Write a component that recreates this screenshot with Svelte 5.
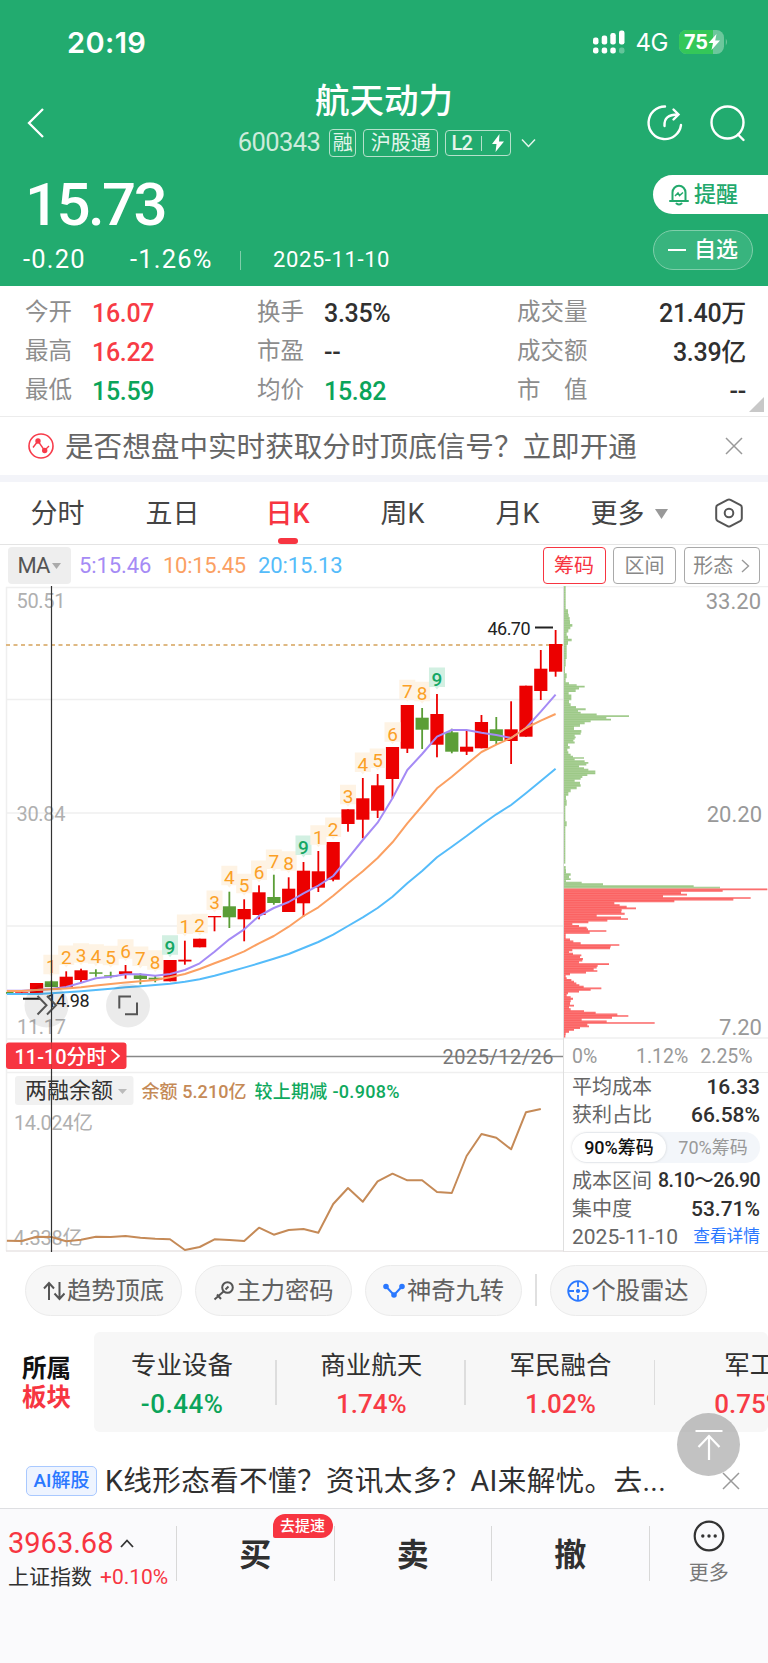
<script>
    const stats = [
        [
            { label: '今开', value: '16.07', tone: 'up' },
            { label: '最高', value: '16.22', tone: 'up' },
            { label: '最低', value: '15.59', tone: 'down' },
        ],
        [
            { label: '换手', value: '3.35%' },
            { label: '市盈', value: '--' },
            { label: '均价', value: '15.82', tone: 'down' },
        ],
        [
            { label: '成交量', value: '21.40万' },
            { label: '成交额', value: '3.39亿' },
            { label: '市　值', value: '--' },
        ],
    ];

    const tabs = ['分时', '五日', '日K', '周K', '月K'];
    let activeTab = $state('日K');

    const sectors = [
        { name: '专业设备', change: '-0.44%' },
        { name: '商业航天', change: '1.74%' },
        { name: '军民融合', change: '1.02%' },
        { name: '军工', change: '0.75%' },
    ];

    // up / down, then body top, body bottom, wick top, wick bottom
    const candles = [
        ['down', 992, 993.5, 992, 993.5],
        ['up', 992.3, 993.6, 992.3, 993.6],
        ['up', 983, 994.3, 983, 994.3],
        ['down', 981.3, 987, 980.5, 987],
        ['up', 976.7, 987.3, 971.3, 987.3],
        ['up', 970.3, 980, 968.7, 982.3],
        ['down', 972.3, 973.8, 969.3, 976.7],
        ['down', 975.3, 976.6, 971.7, 978.3],
        ['up', 971.3, 974, 965, 978.7],
        ['down', 975.3, 979, 973.3, 984.3],
        ['down', 977.7, 979.7, 976, 982.3],
        ['up', 960, 981.3, 960, 981.3],
        ['up', 959.7, 961.5, 940.7, 964.7],
        ['up', 938.7, 947.3, 938.7, 947.3],
        ['up', 916, 917.3, 916, 931.3],
        ['down', 906.3, 917.3, 891.7, 928],
        ['up', 909, 919.3, 899.3, 941.3],
        ['up', 892.3, 915, 885.3, 919.3],
        ['down', 897, 903, 874.7, 904.7],
        ['up', 888.7, 912, 877.3, 912],
        ['up', 870.7, 903.3, 862, 916.7],
        ['up', 871.3, 887.7, 851, 892],
        ['up', 842, 879.7, 842, 881.3],
        ['up', 809.3, 824, 809.3, 831.7],
        ['up', 798.3, 819.7, 778, 838.3],
        ['up', 785.3, 810.7, 774, 818],
        ['up', 747, 779, 747, 798.3],
        ['up', 705, 748.7, 705, 753],
        ['down', 717.7, 729.7, 708, 749],
        ['up', 714, 744.7, 694, 757.3],
        ['down', 732.3, 751.7, 728.7, 753.3],
        ['up', 746.7, 751.7, 730, 755],
        ['up', 722, 748.3, 715, 748.3],
        ['down', 729.3, 741, 717, 744],
        ['up', 729.3, 741, 701.3, 764],
        ['up', 685.7, 736.7, 685.7, 736.7],
        ['up', 668.7, 691, 650, 700],
        ['up', 644, 671.7, 630, 676.7],
    ];

    // baseline of each nine-turn mark, first one sits on candle 3
    const marks = [
        973.3, 964, 961.7, 962.7, 964.3, 957.7, 965, 968.7, 953.7,
        933, 932.3, 909, 884.3, 892.3, 879, 868, 869.7, 854,
        843.7, 836, 803.3, 771, 767, 740.7, 698.3, 700.3, 686,
    ];

    const ma5 = [
        990.7, 990.7, 990, 989, 987, 982.7, 978.3, 976.7, 974.3, 974.3, 975.7, 974, 970,
        963.3, 951.7, 939.3, 929.3, 916, 908, 902, 893.3, 885.7, 876, 858.3, 840, 822.7,
        798.3, 770, 754, 736.7, 730, 730, 732.7, 735, 738, 728, 711.7, 694.7,
    ];
    const ma10 = [
        991, 991, 990, 989.3, 988.5, 987.3, 985.5, 984, 982.6, 981.3, 980, 977.3, 974,
        969, 963.3, 957.7, 951.3, 943.3, 936, 926.7, 916, 907.3, 895.7, 883.3, 871.3, 858,
        842.3, 823.3, 806, 788.3, 776.7, 764.3, 752, 744.7, 738, 728, 720.7, 714,
    ];
    const ma20 = [
        994, 994, 994, 993.3, 992.3, 991.3, 990, 988.7, 987.3, 986.3, 985, 983.7, 981.7,
        979.3, 975.7, 971.7, 967.6, 963.3, 958.7, 954, 948, 942, 934.7, 926, 917.3, 908,
        896.7, 883.3, 871, 857.3, 846.7, 836, 824.7, 814.3, 805, 793.3, 781, 768.7,
    ];
    const balance = [
        1240.7, 1241, 1236.7, 1237, 1241.3, 1239.7, 1236.7, 1237, 1236, 1237.7, 1238.7,
        1239.3, 1250, 1247, 1239.3, 1240, 1241, 1227.7, 1234.7, 1230, 1229, 1232.7, 1204,
        1188, 1201.7, 1181.3, 1173.7, 1180.3, 1180.3, 1192, 1193, 1156, 1134, 1137.7,
        1149.3, 1112.3, 1109,
    ];

    // chip distribution: [row, length], three units to a pixel
    const chipsAbove = [
        [1, 5], [60, 5], [79, 12], [88, 14], [98, 17], [109, 18], [119, 25], [125, 19], [135, 13],
        [144, 8], [154, 12], [162, 23], [169, 12], [184, 8], [209, 8], [229, 5], [254, 3], [269, 8],
        [284, 5], [293, 15], [297, 38], [302, 62], [307, 45], [314, 35], [322, 14], [329, 22],
        [339, 22], [347, 15], [357, 20], [363, 36], [370, 65], [375, 42], [380, 50], [385, 98],
        [390, 195], [396, 127], [401, 141], [406, 80], [412, 62], [417, 48], [427, 30], [437, 52],
        [443, 50], [449, 32], [454, 35], [459, 32], [464, 28], [469, 32], [476, 12], [484, 17],
        [492, 10], [499, 13], [507, 20], [512, 27], [516, 60], [520, 32], [525, 62], [531, 73],
        [536, 67], [541, 45], [546, 60], [551, 73], [556, 94], [562, 94], [567, 70], [573, 55],
        [579, 50], [584, 32], [591, 48], [599, 50], [606, 38], [614, 20], [624, 13], [634, 6],
        [649, 8], [669, 4], [699, 4], [712, 8], [729, 4], [780, 4], [832, 4], [841, 5], [859, 6],
        [864, 20], [874, 15], [879, 20], [885, 6], [889, 53], [895, 117], [900, 389], [905, 468],
    ];
    const chipsBelow = [
        [910, 610], [915, 476], [920, 351], [926, 369], [931, 297], [936, 560], [941, 508],
        [946, 331], [952, 151], [957, 167], [962, 188], [967, 216], [972, 173], [978, 172],
        [983, 182], [989, 98], [994, 171], [999, 192], [1004, 130], [1009, 73], [1014, 25],
        [1020, 45], [1025, 68], [1030, 72], [1035, 127], [1040, 77], [1046, 5], [1054, 5],
        [1061, 18], [1066, 28], [1072, 50], [1077, 166], [1082, 140], [1087, 138], [1093, 25],
        [1098, 15], [1103, 27], [1108, 52], [1113, 48], [1119, 57], [1124, 55], [1129, 45],
        [1134, 135], [1140, 101], [1145, 98], [1150, 89], [1155, 100], [1160, 66], [1165, 18],
        [1171, 5], [1176, 8], [1182, 22], [1187, 30], [1192, 37], [1197, 46], [1202, 59],
        [1207, 112], [1212, 80], [1217, 45], [1222, 12], [1228, 8], [1233, 20], [1238, 27],
        [1244, 20], [1254, 18], [1259, 30], [1264, 15], [1270, 20], [1275, 60], [1280, 95],
        [1285, 160], [1290, 193], [1295, 144], [1301, 53], [1306, 128], [1311, 272], [1316, 70],
        [1321, 75], [1326, 48], [1332, 30], [1337, 15], [1343, 5], [1352, 4],
    ];

    const cx = (i) => 6.9 + i * 14.83;
    const line = (ys) => ys.map((y, i) => `${cx(i).toFixed(1)},${y}`).join(' ');

    function steps(rows) {
        let d = `M0 ${rows[0][0] - 2.5}`;
        rows.forEach(([y, len], i) => {
            const next = rows[i + 1];
            d += `H${len}V${next ? (y + next[0]) / 2 : y + 2.5}`;
        });
        return d + 'H0Z';
    }
</script>

<main>
    <header>
        <div class="status">
            <span class="clock">20:19</span>
            <svg class="signal" width="34" height="24" viewBox="0 0 34 24">
                <g fill="#fff">
                    <rect x="0" y="7.5" width="5.5" height="7" rx="2.2" />
                    <rect x="8.7" y="5.5" width="5.5" height="9" rx="2.2" />
                    <rect x="17.3" y="3" width="5.5" height="11.5" rx="2.2" />
                    <rect x="26" y="0.5" width="5.5" height="14" rx="2.2" />
                    <rect x="0" y="17.5" width="5.5" height="6" rx="2.2" />
                    <rect x="8.7" y="17.5" width="5.5" height="6" rx="2.2" />
                    <rect x="17.3" y="17.5" width="5.5" height="6" rx="2.2" />
                    <rect x="26" y="17.5" width="5.5" height="6" rx="2.2" opacity="0.3" />
                </g>
            </svg>
            <span class="net">4G</span>
            <svg class="battery" width="50" height="24" viewBox="0 0 50 24">
                <rect width="45" height="24" rx="7.5" fill="#6cc79c" />
                <path d="M7.5 0H34V24H7.5A7.5 7.5 0 0 1 0 16.5V7.5A7.5 7.5 0 0 1 7.5 0Z" fill="#34c759" />
                <path d="M46.8 8.5q2.4 3.5 0 7z" fill="#6cc79c" />
                <text x="5" y="19" textLength="24" lengthAdjust="spacingAndGlyphs">75</text>
                <path d="M37.5 4 29.5 13H34l-1.5 7L41 10.5H36.2z" fill="#fff" />
            </svg>
        </div>

        <div class="title-bar">
            <svg class="back" width="18" height="32" viewBox="0 0 18 32">
                <path d="M16 2 2 16l14 14" fill="none" stroke="#fff" stroke-width="2.3" />
            </svg>
            <div class="title">
                <h1>航天动力</h1>
                <div class="code-row">
                    <span class="code">600343</span>
                    <span class="tag">融</span>
                    <span class="tag wide">沪股通</span>
                    <span class="tag level">
                        L2<i></i>
                        <svg width="14" height="18" viewBox="0 0 14 18"><path d="M8.5 0 1 10h4.5L4.500 18 13 7.500H8z" fill="#fff" /></svg>
                    </span>
                    <svg width="15" height="10" viewBox="0 0 15 10">
                        <path d="m1 1.500 6.500 7 6.500-7" fill="none" stroke="#e4f5ec" stroke-width="1.5" />
                    </svg>
                </div>
            </div>
            <div class="tools">
                <svg width="36" height="36" viewBox="0 0 36 36" fill="none" stroke="#fff" stroke-width="2.4" stroke-linecap="round">
                    <path d="M18 1.500A16.300 16.300 0 1 0 34 20" />
                    <path d="M17.500 21C17 13.500 21 9.500 31 9.500M26.500 4.500l5 5-5 5" />
                </svg>
                <svg width="36" height="37" viewBox="0 0 36 37" fill="none" stroke="#fff" stroke-width="2.4" stroke-linecap="round">
                    <circle cx="17.5" cy="17.5" r="16" />
                    <path d="m28 29.500 5.500 5.500" />
                </svg>
            </div>
        </div>

        <div class="quote">
            <div>
                <div class="price">15.73</div>
                <div class="change">
                    <span class="diff">-0.20</span>
                    <span class="pct">-1.26%</span>
                    <i></i>
                    <span class="date">2025-11-10</span>
                </div>
            </div>
            <div class="actions">
                <button class="remind">
                    <svg width="20" height="22" viewBox="0 0 20 22" fill="none" stroke="#22a96c" stroke-width="2">
                        <path d="M3.500 16V8.500a6.500 6.800 0 0 1 13 0V16M1 17h18M7.500 19.500q2.500 2 5 0" stroke-linecap="round" />
                        <path d="m6 12 3-3 1.500 2.500L14 8.500" stroke-width="1.5" />
                    </svg>
                    提醒
                </button>
                <button class="watch"><i></i>自选</button>
            </div>
        </div>
    </header>

    <section class="stats">
        {#each stats as column}
            <dl>
                {#each column as item}
                    <div>
                        <dt>{item.label}</dt>
                        <dd class={item.tone}>{item.value}</dd>
                    </div>
                {/each}
            </dl>
        {/each}
        <svg class="corner" width="15" height="15"><path d="M15 0V15H0z" fill="#c8c8c8" /></svg>
    </section>

    <section class="notice">
        <svg width="26" height="26" viewBox="0 0 26 26" fill="none" stroke="#f73b4a" stroke-width="1.6">
            <circle cx="13" cy="13" r="12" />
            <path d="m5 14.500 5-6.500 6.500 9.500 4.500-4.500" stroke-width="1.4" />
            <circle cx="10" cy="8" r="1.9" fill="#f73b4a" />
            <circle cx="16.7" cy="17.5" r="1.9" fill="#f73b4a" />
        </svg>
        <p>是否想盘中实时获取分时顶底信号？立即开通</p>
        <svg class="close" width="18" height="18" viewBox="0 0 18 18"><path d="m1 1 16 16M17 1 1 17" stroke="#999" stroke-width="1.5" /></svg>
    </section>

    <nav>
        {#each tabs as tab}
            <button class:active={tab === activeTab} onclick={() => (activeTab = tab)}>{tab}</button>
        {/each}
        <button class="menu">更多<svg width="13" height="10"><path d="M0 0H13L6.500 10z" fill="#999" /></svg></button>
        <svg class="setting" width="28" height="30" viewBox="0 0 28 30" fill="none" stroke="#555" stroke-width="2">
            <path d="M12.500 1.800q1.500-.8 3 0l10 5.400q1.300.8 1.300 2.200v11.200q0 1.400-1.300 2.200l-10 5.400q-1.500.8-3 0l-10-5.400q-1.300-.8-1.300-2.200V9.400q0-1.400 1.300-2.200z" />
            <circle cx="14" cy="15" r="4.3" />
        </svg>
    </nav>

    <div class="ma-row">
        <span class="select">MA<svg width="9" height="6"><path d="M0 0H9L4.500 6z" fill="#aaa" /></svg></span>
        <span class="ma5">5:15.46</span>
        <span class="ma10">10:15.45</span>
        <span class="ma20">20:15.13</span>
        <div class="switches">
            <button class="on">筹码</button>
            <button>区间</button>
            <button class="shape">形态<svg width="9" height="14" viewBox="0 0 9 14"><path d="m1 1 6.500 6L1 13" fill="none" stroke="#999" stroke-width="1.4" /></svg></button>
        </div>
    </div>

    <section class="charts">
        <svg class="kline" width="563" height="666" viewBox="0 586 563 666">
            <clipPath id="plot"><path d="M6 586H563V1252H6z" /></clipPath>
            <g stroke="#efefef" stroke-width="1.5">
                <path d="M6 587.500H563M6 699.500H563M6 813H563M6 926H563M6 1039H563M6 1072.500H563" />
                <path d="M6.500 587V1251" />
                <path d="M6 1251H563" stroke="#e8e4e4" />
            </g>
            <g class="axis">
                <text x="16.5" y="607.5" textLength="49">50.51</text>
                <text x="16.5" y="821" textLength="49">30.84</text>
                <text x="17" y="1034" textLength="49">11.17</text>
                <text x="14" y="1130" textLength="79">14.024亿</text>
                <text x="13.5" y="1244.5" textLength="69">4.338亿</text>
            </g>
            <path d="M6 645H563" stroke="#dfb983" stroke-width="2" stroke-dasharray="4 3.5" />

            <g clip-path="url(#plot)">
                {#each candles as [kind, top, bottom, high, low], i}
                    <g class={kind}>
                        <rect x={cx(i) - 0.9} y={high} width="1.8" height={low - high} />
                        <rect x={cx(i) - 6.6} y={top} width="13.2" height={bottom - top} />
                    </g>
                {/each}
            </g>

            {#each marks as y, i}
                {@const x = cx(i + 3)}
                {@const n = (i % 9) + 1}
                <g class="mark" class:nine={n === 9}>
                    <path d="M{x - 8} {y - 18.5}h16v19.500h-6l-2 2.500-2-2.500h-6z" />
                    <text {x} {y} text-anchor="middle">{n}</text>
                </g>
            {/each}

            <g fill="none" stroke-width="2" stroke-linejoin="round" clip-path="url(#plot)">
                <polyline points={line(ma5)} stroke="#a58bf5" />
                <polyline points={line(ma10)} stroke="#fba062" />
                <polyline points={line(ma20)} stroke="#55bcfa" />
                <polyline points={line(balance)} stroke="#c58a57" />
            </g>

            <path d="M535 627.500H553M23 998.700H40" stroke="#222" stroke-width="2" />
            <text class="peak" x="487.5" y="634.5" textLength="43">46.70</text>
            <text class="peak" x="46.5" y="1006.5" textLength="43">14.98</text>

            <g fill="#000" fill-opacity="0.08">
                <circle cx="46.5" cy="1005.5" r="22" />
                <circle cx="128" cy="1005.5" r="22" />
            </g>
            <path d="m37.500 996 9 9.300-9 9.200M47 996l9 9.300-9 9.200M119.300 1008.500V996.500H131M137 1002.500V1014.300H125" fill="none" stroke="#555" stroke-width="2" />

            <path d="M126 1056.500H563" stroke="#888" stroke-width="1.3" />
            <text class="day" x="442.5" y="1063.5" textLength="111">2025/12/26</text>

            <rect x="15" y="1076" width="118.5" height="29" rx="3" fill="#f1f1f1" />
            <text class="indicator" x="25" y="1098" textLength="88">两融余额</text>
            <path d="M118 1089h9l-4.500 5z" fill="#bbb" />
            <text class="legend" x="141.5" y="1098" textLength="105" fill="#c58a57">余额 5.210亿</text>
            <text class="legend" x="254.5" y="1098" textLength="145" fill="#0fa95e">较上期减 -0.908%</text>

            <path d="M51.500 586V1252" stroke="#333" stroke-width="1.2" />
            <rect x="6" y="1042.5" width="120.5" height="26.5" rx="3" fill="#f73541" />
            <text class="flag" x="14.5" y="1063.5" textLength="92">11-10分时</text>
            <path d="m111.500 1049.500 7.500 6.500-7.500 6.500" fill="none" stroke="#fff" stroke-width="1.7" />
            <path d="M51.500 1042V1069" stroke="#a33" stroke-opacity="0.5" />
        </svg>

        <div class="chips">
            <div class="profile">
                <svg width="205" height="453" viewBox="0 0 615 1359">
                    <defs>
                        <pattern id="rows" width="8" height="5.22" patternUnits="userSpaceOnUse">
                            <rect width="8" height="1.6" fill="#fff" fill-opacity="0.22" />
                        </pattern>
                    </defs>
                    <path d="M0 2H615M0 1356H615" stroke="#efefef" stroke-width="4" />
                    <path d={steps(chipsAbove)} fill="#9cc886" />
                    <path d={steps(chipsBelow)} fill="#fb6060" />
                    <path d={steps([...chipsAbove, ...chipsBelow])} fill="url(#rows)" />
                    <path d="M0 833H10V840H0z" fill="#fff" />
                </svg>
                <span class="top">33.20</span>
                <span class="middle">20.20</span>
                <span class="bottom">7.20</span>
            </div>
            <div class="scale"><span>0%</span><span>1.12%</span><span>2.25%</span></div>
            <div class="detail">
                <div><span>平均成本</span><b>16.33</b></div>
                <div><span>获利占比</span><b>66.58%</b></div>
                <div class="toggle">
                    <button class="on">90%筹码</button>
                    <button>70%筹码</button>
                </div>
                <div><span>成本区间</span><b class="range">8.10～26.90</b></div>
                <div><span>集中度</span><b>53.71%</b></div>
                <div><span class="when">2025-11-10</span><a href="#detail">查看详情</a></div>
            </div>
        </div>
    </section>

    <section class="tools-row">
        <button>
            <svg width="22" height="20" viewBox="0 0 22 20" fill="none" stroke="#555" stroke-width="2">
                <path d="M6 19V2M1 7.500 6 2l5 5.500M16.500 1v17M11.500 12.500l5 5.500 5-5.500" />
            </svg>趋势顶底
        </button>
        <button>
            <svg width="21" height="20" viewBox="0 0 21 20" fill="none" stroke="#555" stroke-width="2">
                <circle cx="14.5" cy="6.5" r="5.3" /><path d="M10.800 10.300 1.500 18.500M4 13.500l4 4.500M12.500 8.500l3-3" />
            </svg>主力密码
        </button>
        <button>
            <svg width="22" height="16" viewBox="0 0 22 16" fill="#2a78ff" stroke="#2a78ff" stroke-width="2">
                <path d="m3 3.500 8 8.500 8-8.500" fill="none" />
                <circle cx="3" cy="3.5" r="1.8" /><circle cx="11" cy="12" r="1.8" /><circle cx="19" cy="3.5" r="1.8" />
            </svg>神奇九转
        </button>
        <i></i>
        <button>
            <svg width="22" height="22" viewBox="0 0 22 22" fill="none" stroke="#2a78ff" stroke-width="1.8">
                <circle cx="11" cy="11" r="9.8" /><path d="M11 1v6M11 15v6M1 11h6M15 11h6" />
                <circle cx="11" cy="11" r="1.2" fill="#2a78ff" />
            </svg>个股雷达
        </button>
    </section>

    <section class="sectors">
        <h2>所属<em>板块</em></h2>
        <ul>
            {#each sectors as sector}
                <li>
                    <span>{sector.name}</span>
                    <strong class={sector.change.startsWith('-') ? 'down' : 'up'}>{sector.change}</strong>
                </li>
            {/each}
        </ul>
    </section>

    <section class="ai">
        <span class="badge">AI解股</span>
        <p>K线形态看不懂？资讯太多？AI来解忧。去...</p>
        <svg class="close" width="18" height="18" viewBox="0 0 18 18"><path d="m1 1 16 16M17 1 1 17" stroke="#999" stroke-width="1.5" /></svg>
        <button class="to-top" aria-label="回到顶部">
            <svg width="28" height="32" viewBox="0 0 28 32" fill="none" stroke="#fff" stroke-width="2.2">
                <path d="M0.500 2H27.500M14 31V8M3.500 18 14 7l10.500 11" />
            </svg>
        </button>
    </section>

    <footer>
        <div class="index">
            <div class="points">3963.68<svg width="14" height="9" viewBox="0 0 14 9"><path d="m1 8 6-6.500L13 8" fill="none" stroke="#333" stroke-width="1.8" /></svg></div>
            <div class="name">上证指数<span>+0.10%</span></div>
        </div>
        <button>买<span class="tip">去提速</span></button>
        <button>卖</button>
        <button>撤</button>
        <div class="extra">
            <svg width="32" height="32" viewBox="0 0 32 32">
                <circle cx="16" cy="16" r="14.3" fill="none" stroke="#333" stroke-width="2.2" />
                <g fill="#333"><circle cx="9.8" cy="16" r="1.7" /><circle cx="16" cy="16" r="1.7" /><circle cx="22.2" cy="16" r="1.7" /></g>
            </svg>
            更多
        </div>
    </footer>
</main>

<style>
    :global(body) {
        background: #fafafc;
        margin: 0;
    }

    main {
        background: #fff;
        color: #303030;
        font-family: Roboto, "Noto Sans CJK SC", sans-serif;
        height: 1663px;
        line-height: 1;
        overflow: hidden;
        width: 768px;
    }

    main * {
        box-sizing: border-box;
    }

    button {
        align-items: center;
        background: none;
        border: 0;
        color: inherit;
        display: flex;
        font: inherit;
        justify-content: center;
        padding: 0;
        white-space: nowrap;
    }

    svg {
        display: block;
        flex: none;
    }

    p, h1, h2, dl, dd, ul {
        margin: 0;
        padding: 0;
    }

    .up {
        color: #f73b45;
        fill: #ec0000;
    }

    .down {
        color: #0ba45a;
        fill: #5b9e37;
    }

    header {
        background: #22ab6f;
        color: #fff;
        height: 286px;
    }

    .status {
        align-items: center;
        display: flex;
        height: 84px;
        padding: 0 39px 0 67px;
    }

    .clock {
        flex: 1;
        font-family: Inter, sans-serif;
        font-size: 29px;
        font-weight: 600;
        letter-spacing: 0.4px;
    }

    .net {
        font-family: Inter, sans-serif;
        font-size: 24px;
        letter-spacing: -0.5px;
        margin: 2px 11px 0 9px;
    }

    .battery text {
        fill: #fff;
        font-family: Inter, sans-serif;
        font-size: 20px;
        font-weight: 700;
    }

    .title-bar {
        align-items: center;
        display: grid;
        grid-template-columns: 200px 1fr 200px;
        height: 78px;
    }

    .back {
        margin-left: 27px;
    }

    .title {
        align-items: center;
        display: flex;
        flex-direction: column;
        margin-top: -7px;
    }

    h1 {
        font-size: 34.5px;
        font-weight: 500;
        line-height: 38px;
    }

    .code-row {
        align-items: center;
        display: flex;
        margin: 9px 0 0 6px;
    }

    .code {
        color: #cdebdc;
        font-size: 25.5px;
        letter-spacing: -0.6px;
        margin-right: 9px;
    }

    .tag {
        align-items: center;
        border: 1.5px solid #b5e1cb;
        border-radius: 4px;
        color: #e4f5ec;
        display: flex;
        font-size: 20px;
        height: 28px;
        justify-content: center;
        margin-right: 7px;
        width: 27px;
    }

    .tag.wide {
        width: 75px;
    }

    .tag.level {
        font-weight: 500;
        height: 26px;
        letter-spacing: -1px;
        margin-right: 10px;
        width: 66px;
    }

    .level i {
        background: #b5e1cb;
        height: 15px;
        margin: 0 9px;
        width: 1px;
    }

    .tools {
        display: flex;
        gap: 27px;
        justify-content: flex-end;
        padding-right: 22px;
    }

    .quote {
        display: flex;
        justify-content: space-between;
    }

    .price {
        font-size: 60px;
        font-weight: 500;
        letter-spacing: -2.6px;
        line-height: 60px;
        margin: 13px 0 0 25px;
    }

    .change {
        align-items: center;
        display: flex;
        font-size: 25.5px;
        height: 50px;
        letter-spacing: 1.2px;
        padding-left: 23px;
    }

    .diff {
        width: 107px;
    }

    .pct {
        width: 110px;
    }

    .change i {
        background: #7fceaa;
        height: 19px;
        width: 1px;
    }

    .date {
        font-size: 22px;
        letter-spacing: 0.6px;
        margin-left: 32px;
    }

    .actions {
        font-size: 22px;
        font-weight: 500;
        padding-top: 13px;
        width: 115px;
    }

    .remind {
        background: #fff;
        border-radius: 20px 0 0 20px;
        color: #22a96c;
        gap: 5px;
        height: 39px;
        padding-right: 14px;
        width: 100%;
    }

    .watch {
        background: #38b47e;
        border: 1.5px solid #7fceaa;
        border-radius: 20px;
        gap: 8px;
        height: 40px;
        margin-top: 16px;
        width: 100px;
    }

    .watch i {
        background: #fff;
        height: 2px;
        width: 18px;
    }

    .stats {
        border-bottom: 1px solid #ececec;
        display: grid;
        grid-template-columns: 232px 260px 1fr;
        height: 131px;
        padding: 8px 22px 0 25px;
        position: relative;
    }

    .stats div {
        align-items: center;
        display: flex;
        font-size: 25px;
        height: 39px;
    }

    dt {
        color: #8d8d8d;
        font-size: 23.5px;
        margin-top: -2px;
        width: 67px;
    }

    dd {
        font-weight: 500;
        letter-spacing: -0.3px;
    }

    dl:last-of-type dd {
        flex: 1;
        text-align: right;
    }

    dl:last-of-type dt {
        width: 80px;
    }

    .corner {
        bottom: 4px;
        position: absolute;
        right: 4px;
    }

    .notice {
        align-items: center;
        border-bottom: 7px solid #f3f4f9;
        display: flex;
        height: 65px;
        padding: 0 25px 0 28px;
    }

    .notice p {
        color: #666;
        flex: 1;
        font-size: 28.6px;
        margin-left: 11px;
        padding-top: 3px;
        white-space: nowrap;
    }

    nav {
        align-items: center;
        border-bottom: 1.5px solid #e4e4e4;
        display: flex;
        height: 63px;
        padding: 0 25px 0 0;
    }

    nav button {
        color: #444;
        font-size: 27px;
        height: 62px;
        padding-top: 2px;
        position: relative;
        width: 115px;
    }

    nav .menu {
        gap: 10px;
        margin-left: 14px;
        width: 80px;
    }

    nav .active {
        color: #f73541;
        font-weight: 500;
    }

    nav .active::after {
        background: #f73541;
        border-radius: 3px;
        bottom: 0;
        content: '';
        height: 6px;
        left: 48px;
        position: absolute;
        width: 20px;
    }

    .setting {
        margin-left: auto;
    }

    .ma-row {
        align-items: center;
        display: flex;
        font-size: 22px;
        height: 41px;
        letter-spacing: -0.1px;
        padding: 0 8px;
    }

    .select {
        align-items: center;
        background: #eee;
        border-radius: 4px;
        color: #555;
        display: flex;
        gap: 3px;
        height: 37px;
        justify-content: center;
        letter-spacing: -1px;
        margin-right: 8px;
        width: 63px;
    }

    .ma5 {
        color: #a58bf5;
        width: 84px;
    }

    .ma10 {
        color: #fba062;
        letter-spacing: -0.3px;
        width: 95px;
    }

    .ma20 {
        color: #55bcfa;
    }

    .switches {
        display: flex;
        font-size: 20px;
        gap: 7.5px;
        letter-spacing: 0;
        margin-left: auto;
    }

    .switches button {
        border: 1.5px solid #a9a9a9;
        border-radius: 4px;
        color: #888;
        height: 37px;
        padding-top: 1px;
        width: 63px;
    }

    .switches .on {
        border-color: #f73541;
        color: #f73541;
    }

    .switches .shape {
        gap: 8px;
        width: 76.5px;
    }

    .charts {
        display: flex;
        height: 666px;
    }

    .axis {
        fill: #b0b0b0;
        font-size: 20px;
    }

    .mark path {
        fill: #fef3e4;
    }

    .mark text {
        fill: #fba026;
        font-size: 19px;
    }

    .mark.nine path {
        fill: #d2f0e2;
    }

    .mark.nine text {
        fill: #16a765;
        font-weight: 500;
    }

    .peak {
        fill: #222;
        font-size: 18px;
    }

    .day {
        fill: #777;
        font-size: 20px;
    }

    .indicator {
        fill: #333;
        font-size: 22px;
    }

    .legend {
        font-size: 18px;
        font-weight: 500;
    }

    .flag {
        fill: #fff;
        font-size: 20px;
        font-weight: 500;
    }

    .chips {
        border-bottom: 1.5px solid #e8e4e4;
        border-left: 1px solid #dfdfdf;
        flex: 1;
    }

    .profile {
        height: 453px;
        position: relative;
    }

    .profile span {
        color: #999;
        font-size: 22px;
        position: absolute;
        right: 7px;
    }

    .profile .top {
        right: 8px;
        top: 5px;
    }

    .profile .middle {
        top: 218px;
    }

    .profile .bottom {
        bottom: 0;
    }

    .scale {
        align-items: center;
        border-bottom: 1.5px solid #efefef;
        color: #999;
        display: flex;
        font-size: 19.5px;
        height: 34px;
        padding: 2px 0 0 8px;
    }

    .scale span:first-child {
        width: 64px;
    }

    .scale span:last-child {
        margin-left: 12px;
    }

    .detail {
        padding: 0 9px 0 8px;
    }

    .detail div {
        align-items: center;
        color: #666;
        display: flex;
        font-size: 20px;
        height: 28px;
        justify-content: space-between;
        white-space: nowrap;
    }

    .detail b {
        color: #303030;
        font-size: 21px;
        font-weight: 500;
    }

    .detail b.range {
        font-size: 19.5px;
        letter-spacing: -0.6px;
    }

    .detail .when {
        font-size: 21px;
    }

    .detail a {
        color: #2a78ff;
        font-size: 16.7px;
        text-decoration: none;
    }

    .detail .toggle {
        background: #f3f6fa;
        border-radius: 16px;
        font-size: 18px;
        height: 31px;
        margin: 3px 0 4px;
    }

    .toggle button {
        border-radius: 15px;
        color: #999;
        height: 29px;
        width: 94px;
    }

    .toggle .on {
        background: #fff;
        box-shadow: 0 0 3px rgb(0 0 0 / 15%);
        color: #111;
        font-weight: 500;
    }

    .tools-row {
        align-items: center;
        display: flex;
        gap: 13px;
        height: 78px;
        padding: 0 25px 2px;
    }

    .tools-row button {
        background: #f7f7f7;
        border: 1.5px solid #ebebeb;
        border-radius: 26px;
        color: #606060;
        font-size: 24.3px;
        gap: 2px;
        height: 51px;
        padding-top: 2px;
        width: 157px;
    }

    .tools-row i {
        background: #e0e0e0;
        height: 32px;
        width: 1.5px;
    }

    .sectors {
        align-items: center;
        display: flex;
        height: 104px;
        padding-left: 22px;
    }

    h2 {
        color: #111;
        font-size: 24.5px;
        font-weight: 700;
        line-height: 29px;
        padding-top: 1px;
        width: 71.5px;
    }

    h2 em {
        color: #f73541;
        display: block;
        font-style: normal;
    }

    ul {
        background: #f7f7f7;
        border-radius: 6px;
        display: flex;
        flex: 1;
        height: 100px;
        list-style: none;
        overflow: hidden;
    }

    li {
        align-items: center;
        display: flex;
        flex: none;
        flex-direction: column;
        font-size: 25.5px;
        padding-top: 21px;
        position: relative;
        width: 189.2px;
    }

    li:first-child {
        margin-left: -6px;
    }

    li::after {
        background: #ddd;
        content: '';
        height: 45px;
        position: absolute;
        right: 0;
        top: 28px;
        width: 1.5px;
    }

    li strong {
        font-size: 26px;
        font-weight: 500;
        margin-top: 12px;
    }

    li strong.down {
        letter-spacing: 0.5px;
    }

    .ai {
        align-items: center;
        display: flex;
        height: 74px;
        padding: 19px 28px 0 26px;
        position: relative;
    }

    .ai .badge {
        background: #eef4ff;
        border: 1.5px solid #a9c9ff;
        border-radius: 5px;
        color: #2a78ff;
        font-size: 19px;
        font-weight: 500;
        line-height: 28px;
        text-align: center;
        width: 71px;
    }

    .ai p {
        flex: 1;
        font-size: 28.6px;
        letter-spacing: 0.35px;
        margin-left: 8px;
        padding-top: 2px;
        white-space: nowrap;
    }

    .to-top {
        background: rgb(150 150 150 / 58%);
        border-radius: 50%;
        height: 63px;
        position: absolute;
        right: 28px;
        top: -21px;
        width: 63px;
    }

    footer {
        background: #fafafc;
        border-top: 1.5px solid #dedfe2;
        display: flex;
        height: 155px;
        padding-top: 17px;
    }

    .index {
        border-right: 1.5px solid #d8d8d8;
        height: 55px;
        padding-left: 8px;
        width: 177px;
    }

    .points {
        align-items: center;
        color: #f73541;
        display: flex;
        font-size: 29px;
        gap: 7px;
        height: 34px;
    }

    .name {
        font-size: 21px;
        margin-top: 7px;
        white-space: nowrap;
    }

    .name span {
        color: #f73541;
        margin-left: 8px;
    }

    footer button {
        border-right: 1.5px solid #d8d8d8;
        font-size: 32px;
        font-weight: 700;
        height: 55px;
        padding-top: 2px;
        position: relative;
        width: 157.5px;
    }

    .tip {
        background: #f73541;
        border-radius: 12px 12px 12px 2px;
        color: #fff;
        font-size: 15px;
        font-weight: 500;
        line-height: 24px;
        position: absolute;
        right: 1px;
        text-align: center;
        top: -12px;
        width: 60px;
    }

    .extra {
        align-items: center;
        color: #777;
        display: flex;
        flex: 1;
        flex-direction: column;
        font-size: 20px;
        gap: 11px;
        margin-top: -6px;
    }
</style>
